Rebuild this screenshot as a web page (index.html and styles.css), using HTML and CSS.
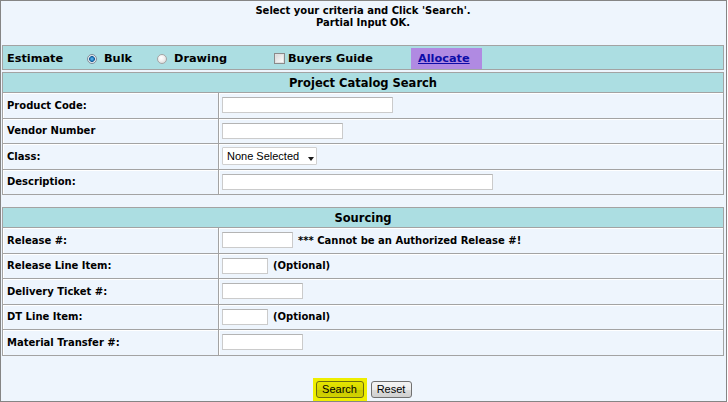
FILE: index.html
```html
<!DOCTYPE html>
<html>
<head>
<meta charset="utf-8">
<title>Project Catalog Search</title>
<link rel="stylesheet" href="styles.css">
</head>
<body>
<div class="frame">
  <p class="intro">Select your criteria and Click 'Search'.<br>Partial Input OK.</p>

  <div class="options">
    <span class="opt-title">Estimate</span>
    <label class="opt opt-bulk"><input type="radio" name="est" checked><span>Bulk</span></label>
    <label class="opt opt-drawing"><input type="radio" name="est"><span>Drawing</span></label>
    <label class="opt opt-guide"><input type="checkbox"><span>Buyers Guide</span></label>
    <a class="alloc" href="#">Allocate</a>
  </div>

  <table class="grid catalog">
    <tr><th colspan="2">Project Catalog Search</th></tr>
    <tr><td class="lbl">Product Code:</td><td class="fld"><input type="text" class="in in-171"></td></tr>
    <tr><td class="lbl">Vendor Number</td><td class="fld"><input type="text" class="in in-121"></td></tr>
    <tr><td class="lbl">Class:</td><td class="fld"><span class="sel"><select><option>None Selected</option></select></span></td></tr>
    <tr><td class="lbl">Description:</td><td class="fld"><input type="text" class="in in-271"></td></tr>
  </table>

  <table class="grid sourcing">
    <tr><th colspan="2">Sourcing</th></tr>
    <tr><td class="lbl">Release #:</td><td class="fld"><input type="text" class="in in-71"><span class="note">*** Cannot be an Authorized Release #!</span></td></tr>
    <tr><td class="lbl">Release Line Item:</td><td class="fld"><input type="text" class="in in-46"><span class="note">(Optional)</span></td></tr>
    <tr><td class="lbl">Delivery Ticket #:</td><td class="fld"><input type="text" class="in in-81"></td></tr>
    <tr><td class="lbl">DT Line Item:</td><td class="fld"><input type="text" class="in in-46"><span class="note">(Optional)</span></td></tr>
    <tr><td class="lbl">Material Transfer #:</td><td class="fld"><input type="text" class="in in-81"></td></tr>
  </table>

  <div class="actions">
    <span class="highlight"><button type="button" class="btn btn-search">Search</button></span>
    <button type="reset" class="btn btn-reset">Reset</button>
  </div>
</div>
</body>
</html>
```

FILE: styles.css
```css
* { box-sizing: border-box; }

body {
  margin: 0;
  font-family: "DejaVu Sans", Verdana, sans-serif;
  color: #000;
  background: #ffffff;
}

.frame {
  width: 727px;
  height: 402px;
  border: 1px solid #858585;
  background: #eef5fd;
  padding: 0 2px 0 1px;
}

.intro {
  margin: 0;
  padding-top: 3.5px;
  font-size: 10px;
  font-weight: bold;
  line-height: 12.5px;
  text-align: center;
}

/* option bar */
.options {
  margin-top: 15.5px;
  width: 722px;
  height: 25px;
  display: flex;
  align-items: stretch;
  padding: 2px 0 0 4px;
  border: 1px solid #a3a3a3;
  background: #acdee2;
  font-size: 11.3px;
  font-weight: bold;
  line-height: 21px;
}

.opt-title { width: 80px; }

.opt {
  display: flex;
  align-items: center;
}
.opt-bulk { width: 70px; }
.opt-drawing { width: 117px; }
.opt-guide { width: 137px; }

.opt input[type="radio"] {
  appearance: none;
  -webkit-appearance: none;
  width: 10px;
  height: 10px;
  margin: 0 7px 0 0;
  border-radius: 50%;
  border: 1px solid #a4a4a4;
  background: radial-gradient(circle at 40% 35%, #ffffff 0, #f2f2f2 40%, #d2d2d2 100%);
}
.opt input[type="radio"]:checked {
  border-color: #7f8c99;
  background: radial-gradient(circle at 50% 50%, #6fc0f0 0, #2a86c8 1.6px, #175c94 2.6px, #dfe6ec 3.2px, #ffffff 100%);
}

.opt input[type="checkbox"] {
  appearance: none;
  -webkit-appearance: none;
  width: 11px;
  height: 11px;
  margin: 0 3px 0 0;
  border: 1px solid #8a8a8a;
  background: linear-gradient(135deg, #d6d6d6 0, #f4f4f4 70%, #ffffff 100%);
  box-shadow: inset 0 0 0 1px #e2e2e2;
}

.alloc {
  width: 71px;
  padding-left: 7px;
  background: #b08ae2;
  color: #0c0ca8;
  text-decoration: underline;
}

/* tables */
.grid {
  width: 722px;
  border-collapse: separate;
  border-spacing: 0;
  border: 1px solid #a3a3a3;
  border-bottom: 0;
  margin-top: 2px;
}
.grid.sourcing { margin-top: 12px; }

.grid th {
  height: 20px;
  padding: 0;
  background: #acdee2;
  border-bottom: 1px solid #a3a3a3;
  font-size: 11.5px;
  font-weight: bold;
  text-align: center;
  vertical-align: middle;
}

.grid td {
  height: 25.5px;
  padding: 0;
  border-bottom: 1px solid #a3a3a3;
  box-shadow: inset 1px 1px 0 #ffffff;
  vertical-align: middle;
  font-size: 10px;
  font-weight: bold;
}

.grid td.lbl {
  width: 216px;
  padding-left: 4px;
  border-right: 1px solid #a3a3a3;
}
.grid td.fld { padding-left: 3px; }

.in {
  height: 16px;
  margin: 0;
  padding: 0 2px;
  border: 1px solid #cbcbcb;
  border-top-color: #b4b4b4;
  background: #ffffff;
  vertical-align: middle;
  font: 11px "Liberation Sans", Arial, sans-serif;
}
.in-171 { width: 171px; }
.in-121 { width: 121px; }
.in-271 { width: 271px; }
.in-71 { width: 71px; }
.in-46 { width: 46px; }
.in-81 { width: 81px; }

.note {
  margin-left: 5px;
  vertical-align: middle;
}

.sel {
  position: relative;
  display: inline-block;
  vertical-align: middle;
}
.sel select {
  appearance: none;
  -webkit-appearance: none;
  display: block;
  width: 95px;
  height: 18px;
  margin: 0;
  padding: 0 0 0 4px;
  border: 1px solid #d0d0d0;
  border-radius: 1px;
  background: #ffffff;
  color: #000;
  font: 11px "Liberation Sans", Arial, sans-serif;
}
.sel::after {
  content: "";
  position: absolute;
  right: 3px;
  top: 10px;
  border-left: 3.5px solid transparent;
  border-right: 3.5px solid transparent;
  border-top: 4px solid #1a1a1a;
}

/* buttons */
.actions {
  width: 722px;
  margin-top: 22px;
  padding-right: 2px;
  display: flex;
  justify-content: center;
  align-items: flex-start;
  gap: 4px;
}

.highlight {
  display: block;
  padding: 3px;
  background: #eeee00;
}

.btn {
  display: block;
  height: 17px;
  margin: 0;
  padding: 0;
  border: 1px solid #707070;
  border-radius: 3px;
  font: 11px "Liberation Sans", Arial, sans-serif;
  color: #000;
  line-height: 15px;
}
.btn-search {
  width: 48px;
  border-color: #6c6c10;
  background: linear-gradient(#e6e600, #d6d600 50%, #c8c800 51%, #d2d200);
}
.btn-reset {
  width: 41px;
  margin-top: 3px;
  background: linear-gradient(#f4f4f4, #ebebeb 50%, #dddddd 51%, #cfcfcf);
}
```
